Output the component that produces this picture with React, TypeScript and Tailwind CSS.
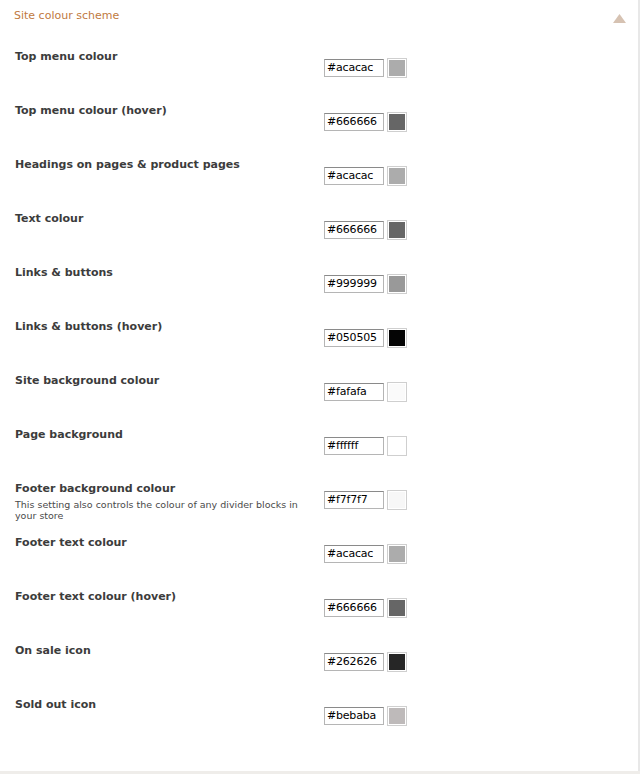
const rows: { label: string; value: string; note?: string }[] = [
  { label: "Top menu colour", value: "#acacac" },
  { label: "Top menu colour (hover)", value: "#666666" },
  { label: "Headings on pages & product pages", value: "#acacac" },
  { label: "Text colour", value: "#666666" },
  { label: "Links & buttons", value: "#999999" },
  { label: "Links & buttons (hover)", value: "#050505" },
  { label: "Site background colour", value: "#fafafa" },
  { label: "Page background", value: "#ffffff" },
  {
    label: "Footer background colour",
    value: "#f7f7f7",
    note: "This setting also controls the colour of any divider blocks in your store",
  },
  { label: "Footer text colour", value: "#acacac" },
  { label: "Footer text colour (hover)", value: "#666666" },
  { label: "On sale icon", value: "#262626" },
  { label: "Sold out icon", value: "#bebaba" },
];

export default function App() {
  return (
    <div className="w-[640px] h-[774px] bg-white font-['DejaVu_Sans',sans-serif] flex flex-col">
      <div className="flex-1 border-r-2 border-[#e8e8e8] flex flex-col">
        <div className="flex items-center justify-between h-[30px] pl-[14px] pr-[12px]">
          <span className="text-[11px] text-[#bf7a3f] leading-none">Site colour scheme</span>
          <svg width="13" height="9" viewBox="0 0 13 9" className="mt-[6px]">
            <polygon points="6.5,0 13,9 0,9" fill="#d6c2b2" />
          </svg>
        </div>
        <div className="pt-[20px]">
          {rows.map((r) => (
            <div key={r.label} className="flex h-[54px]">
              <div className="w-[324px] shrink-0 pl-[15px] pr-[22px]">
                <div className="text-[11px] font-bold text-[#3c3c3c] leading-[14px]">{r.label}</div>
                {r.note && (
                  <div className="text-[9.5px] text-[#4a4a4a] leading-[11px] mt-[3px]">{r.note}</div>
                )}
              </div>
              <div className="pt-[9px] flex items-start gap-[3px]">
                <div className="w-[60px] h-[18px] border border-[#b5b5b5] border-t-[#8a8a8a] text-[11px] tracking-[-0.2px] leading-[16px] pl-[2px] text-black">
                  {r.value}
                </div>
                <div className="w-[20px] h-[20px] border border-[#cfcfcf] p-[1px] -mt-[1px]">
                  <div className="w-full h-full" style={{ backgroundColor: r.value }} />
                </div>
              </div>
            </div>
          ))}
        </div>
      </div>
      <div className="h-[3px] bg-[#efedea]" />
    </div>
  );
}
